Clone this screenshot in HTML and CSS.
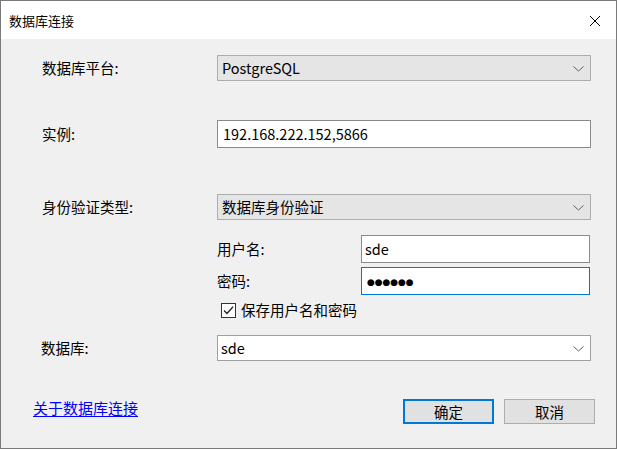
FILE: index.html
```html
<!DOCTYPE html>
<html lang="zh-CN">
<head>
<meta charset="utf-8">
<title>数据库连接</title>
<link rel="stylesheet" href="styles.css">
</head>
<body>
<div class="window">
  <div class="titlebar">
    <span class="title">数据库连接</span>
    <svg class="close" width="12" height="12" viewBox="0 0 12 12"><path d="M1 1 L11 11 M11 1 L1 11" stroke="#000" stroke-width="1" fill="none"/></svg>
  </div>
  <div class="content">
    <div class="form">
      <div class="row row-platform">
        <span class="lbl">数据库平台:</span>
        <div class="combo combo-flat"><span class="val">PostgreSQL</span><svg class="chev" width="11" height="6" viewBox="0 0 11 6"><path d="M0.5 0.5 L5.5 5 L10.5 0.5" stroke="#606060" fill="none"/></svg></div>
      </div>
      <div class="row row-instance">
        <span class="lbl">实例:</span>
        <div class="textbox"><span class="val">192.168.222.152,5866</span></div>
      </div>
      <div class="row row-auth">
        <span class="lbl">身份验证类型:</span>
        <div class="combo combo-flat"><span class="val">数据库身份验证</span><svg class="chev" width="11" height="6" viewBox="0 0 11 6"><path d="M0.5 0.5 L5.5 5 L10.5 0.5" stroke="#606060" fill="none"/></svg></div>
      </div>
      <div class="sub">
        <div class="subrow row-user">
          <span class="sublbl">用户名:</span>
          <div class="textbox short"><span class="val">sde</span></div>
        </div>
        <div class="subrow row-pass">
          <span class="sublbl">密码:</span>
          <div class="textbox short focused"><span class="dots">●●●●●●</span></div>
        </div>
        <div class="check-row">
          <span class="checkbox"><svg width="13" height="13" viewBox="0 0 13 13"><path d="M2 6.5 L5 9.5 L11 2.8" stroke="#222" stroke-width="1.3" fill="none"/></svg></span>
          <span class="check-text">保存用户名和密码</span>
        </div>
      </div>
      <div class="row row-db">
        <span class="lbl lbl-db">数据库:</span>
        <div class="combo combo-edit"><span class="val">sde</span><svg class="chev" width="11" height="6" viewBox="0 0 11 6"><path d="M0.5 0.5 L5.5 5 L10.5 0.5" stroke="#606060" fill="none"/></svg></div>
      </div>
    </div>
    <div class="footer">
      <a class="link" href="#">关于数据库连接</a>
      <div class="buttons">
        <button class="btn btn-default">确定</button>
        <button class="btn">取消</button>
      </div>
    </div>
  </div>
</div>
</body>
</html>
```

FILE: styles.css
```css
* { box-sizing: border-box; }

html, body {
  margin: 0;
  padding: 0;
  background: #f0f0f0;
}

body {
  font-family: "Noto Sans CJK SC", "Noto Sans", sans-serif;
  font-size: 14.5px;
  color: #000;
}

.window {
  width: 617px;
  height: 449px;
  border: 1px solid #7a7a7a;
  background: #f0f0f0;
  display: flex;
  flex-direction: column;
}

/* title bar */
.titlebar {
  height: 38px;
  background: #fff;
  display: flex;
  align-items: center;
  padding: 0 15px 0 8px;
  flex: none;
}

.title {
  font-size: 13px;
  line-height: 16px;
  margin-top: 1px;
}

.close {
  margin-left: auto;
  margin-top: 2px;
}

/* form area */
.content {
  flex: 1;
  display: flex;
  flex-direction: column;
}

.form {
  padding-left: 41px;
  display: flex;
  flex-direction: column;
}

.row {
  display: flex;
  align-items: center;
}

.lbl {
  width: 175px;
  line-height: 18px;
  flex: none;
}

.lbl-db {
  margin-left: -1px;
  width: 176px;
}

.row-platform { margin-top: 16px; }
.row-instance { margin-top: 39px; }
.row-auth { margin-top: 46px; }
.row-db { margin-top: 15px; }

.combo,
.textbox {
  width: 374px;
  height: 26px;
  display: flex;
  align-items: center;
  padding-left: 4px;
  line-height: 18px;
  white-space: nowrap;
}

.combo-flat {
  background: #e5e5e5;
  border: 1px solid #adadad;
}

.combo-edit {
  background: #fff;
  border: 1px solid #a0a0a0;
  padding-left: 3px;
}

.chev {
  margin-left: auto;
  margin-right: 6px;
  margin-top: 1px;
}

.textbox {
  height: 28px;
  background: #fff;
  border: 1px solid #8a8a8a;
  padding-left: 5px;
}

/* credentials block */
.sub {
  margin-left: 175px;
  display: flex;
  flex-direction: column;
}

.subrow {
  display: flex;
  align-items: center;
}

.row-user { margin-top: 15px; }
.row-pass { margin-top: 4px; }

.sublbl {
  width: 144px;
  flex: none;
  line-height: 18px;
}

.textbox.short {
  width: 229px;
  padding-left: 3px;
}

.textbox.focused {
  border-color: #0078d7;
}

.dots {
  font-family: "DejaVu Sans", sans-serif;
  font-size: 9px;
  letter-spacing: -0.1px;
  margin-left: 2px;
  margin-top: 1px;
}

.check-row {
  display: flex;
  align-items: center;
  height: 20px;
  margin-top: 5px;
  padding-left: 4px;
}

.checkbox {
  width: 15px;
  height: 15px;
  border: 1px solid #333;
  background: #fff;
  display: flex;
  align-items: center;
  justify-content: center;
  flex: none;
}

.check-text {
  margin-left: 5px;
  line-height: 18px;
}

/* bottom bar */
.footer {
  display: flex;
  align-items: flex-start;
  margin-top: 38px;
  padding: 0 21px 0 32px;
}

.link {
  color: #0000ff;
  text-decoration: underline;
  text-underline-offset: 2px;
  font-size: 15px;
  line-height: 17px;
  margin-top: 0px;
}

.buttons {
  margin-left: auto;
  display: flex;
  gap: 10px;
}

.btn {
  width: 91px;
  height: 25px;
  background: #e1e1e1;
  border: 1px solid #adadad;
  font-family: inherit;
  font-size: 14.5px;
  line-height: 18px;
  color: #000;
  padding: 0;
}

.btn-default {
  border: 2px solid #0078d7;
}
```
